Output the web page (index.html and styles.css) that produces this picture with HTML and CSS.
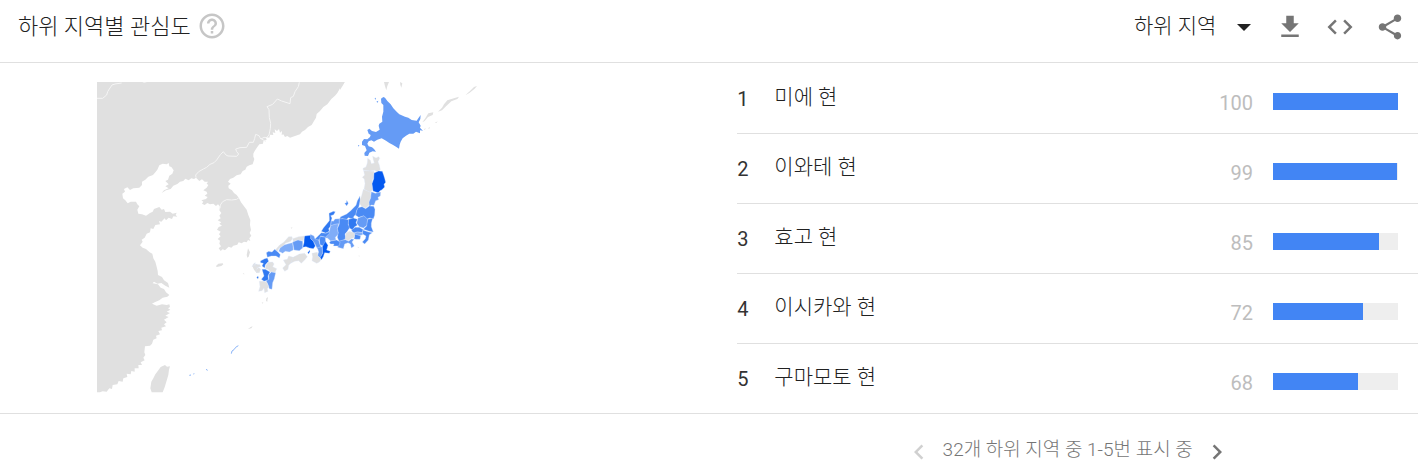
FILE: index.html
```html
<!DOCTYPE html>
<html lang="ko">
<head>
    <meta charset="UTF-8">
    <meta name="viewport" content="width=device-width, initial-scale=1.0">
    <title>하위 지역별 관심도</title>
    <link rel="stylesheet" href="styles.css">
</head>
<body>
    <section class="widget">
        <header class="widget-header">
            <h1>하위 지역별 관심도</h1>
            <button class="icon-button help" aria-label="도움말">
                <svg viewBox="0 0 24 24"><path d="M11 18h2v-2h-2v2zm1-16C6.48 2 2 6.48 2 12s4.48 10 10 10 10-4.48 10-10S17.52 2 12 2zm0 18c-4.41 0-8-3.59-8-8s3.59-8 8-8 8 3.59 8 8-3.59 8-8 8zm0-14c-2.21 0-4 1.79-4 4h2c0-1.1.9-2 2-2s2 .9 2 2c0 2-3 1.75-3 5h2c0-2.25 3-2.5 3-5 0-2.21-1.79-4-4-4z"/></svg>
            </button>
            <div class="actions">
                <div class="select-wrap">
                    <select aria-label="지역 단위">
                        <option>하위 지역</option>
                    </select>
                </div>
                <button class="icon-button" aria-label="다운로드">
                    <svg viewBox="0 0 24 24"><path d="M19 9h-4V3H9v6H5l7 7 7-7zM5 18v2h14v-2H5z"/></svg>
                </button>
                <button class="icon-button" aria-label="삽입">
                    <svg viewBox="0 0 24 24"><path d="M9.4 16.6L4.8 12l4.6-4.6L8 6l-6 6 6 6 1.4-1.4zm5.2 0l4.6-4.6-4.6-4.6L16 6l6 6-6 6-1.4-1.4z"/></svg>
                </button>
                <button class="icon-button" aria-label="공유">
                    <svg viewBox="0 0 24 24"><path d="M18 16.08c-.76 0-1.44.3-1.96.77L8.91 12.7c.05-.23.09-.46.09-.7s-.04-.47-.09-.7l7.05-4.11c.54.5 1.25.81 2.04.81 1.66 0 3-1.34 3-3s-1.34-3-3-3-3 1.34-3 3c0 .24.04.47.09.7L8.04 9.81C7.5 9.31 6.79 9 6 9c-1.66 0-3 1.34-3 3s1.34 3 3 3c.79 0 1.5-.31 2.04-.81l7.12 4.16c-.05.21-.08.43-.08.65 0 1.61 1.31 2.92 2.92 2.92s2.92-1.31 2.92-2.92-1.31-2.92-2.92-2.92z"/></svg>
                </button>
            </div>
        </header>

        <div class="widget-content">
            <div class="map">
                <svg viewBox="291 246 1140 933" role="img" aria-label="지도">
                    <!-- Mainland and Korea -->
                    <g transform="translate(270 225)">
                        <path class="land" d="M21 21H764L758 30 750 40 742 54 735 62 724 72 712 88 700 96 690 108 680 117 678 128 672 138 665 150 654 156 645 165 636 170 630 178 615 183 600 188 592 183 585 186 580 178 575 180 576 168 570 173 567 162 561 168 554 163 556 174 548 172 550 180 540 179 538 188 527 186 530 194 520 199 519 206 508 208 502 216 494 228 490 236 490 245 493 252 488 268 478 271 470 275 466 284 458 288 452 298 440 301 430 308 420 312 414 320 422 326 415 332 416 340 426 346 432 354 440 360 447 370 453 382 462 394 470 404 475 420 481 435 480 450 483 465 479 474 484 482 478 490 481 498 474 495 470 502 462 500 455 505 446 502 442 509 430 512 424 518 416 515 405 526 398 523 392 528 386 520 393 514 388 506 390 497 383 492 392 484 387 478 392 470 381 464 386 456 396 452 388 446 394 442 383 436 392 430 388 422 394 414 388 406 390 395 384 388 378 393 370 386 360 388 352 384 344 390 336 386 340 380 334 376 348 372 353 366 344 362 352 356 350 350 340 346 350 338 355 330 350 326 354 320 344 320 336 313 328 318 318 308 312 312 304 310 296 316 286 311 280 318 270 320 262 327 250 332 242 342 228 346 215 354 222 346 236 340 226 334 236 328 226 318 234 314 238 302 247 296 251 286 244 276 238 274 236 264 230 268 218 266 208 271 202 284 196 292 189 300 175 305 166 314 156 320 156 330 148 338 130 340 120 345 112 337 102 342 105 350 97 356 99 370 106 376 113 385 122 380 138 380 142 388 148 394 142 404 145 416 156 418 168 422 180 414 188 410 192 402 208 396 215 404 222 402 226 411 240 410 248 416 260 413 257 420 262 425 250 424 246 432 236 428 228 436 224 430 214 440 207 438 210 448 196 450 190 462 182 460 180 472 170 476 164 488 155 494 158 500 150 511 158 518 168 522 179 532 187 536 190 550 196 560 200 575 203 588 204 600 216 606 222 616 234 624 238 638 226 632 214 624 202 626 192 620 188 625 204 628 212 638 222 642 228 652 238 660 232 665 218 668 208 676 194 682 186 686 200 692 216 688 230 690 238 688 240 696 234 700 241 704 230 710 240 714 226 722 236 726 222 734 230 742 222 748 228 754 214 758 216 766 205 768 210 778 198 782 200 790 190 794 186 806 180 812 165 814 163 832 166 840 160 848 164 856 152 862 156 870 145 870 146 880 134 880 134 890 124 888 122 898 110 896 112 906 100 910 98 920 86 918 82 928 68 930 66 942 58 940 50 950 38 949 30 952H21z"/>
                        <path class="border" d="M21 70H38L50 60 53 50 58 42 66 30 75 27 95 24M156 19L162 22 170 20M318 308L317 300 326 290 340 282 350 277 360 268 372 263 380 255 386 246 392 238 400 230 408 240 414 243 440 244 446 237 440 230 437 222 450 218 470 217 478 202 490 202 494 190 497 178 507 182 510 188 513 192 522 187 530 188 537 180 541 160 542 145 538 128 537 104 531 95 548 88 562 72 575 78 600 86 602 68 610 64 615 50 625 35 628 22M512 190L528 200M390 400L391 390 398 380 410 374 425 375 440 373 447 368"/>
                        <path class="land" d="M225 870L231 875 240 874 237 884 235 900 229 920 224 937 218 952H185L181 940 184 920 190 910 196 898 205 886 212 876zM378 573L385 566 398 565 400 568 394 573 380 576zM470 540L474 520 480 532 476 545 472 548zM458 597L461 595 464 598zM487 573L500 568 505 576 500 582 506 590 500 594 492 584zM515 683L520 682 518 686zM528 678L529 670 533 668 532 680zM474 762L482 756 488 754 484 760zM465 778L466 775zM526 409L530 407z"/>
                        <path class="okinawa" d="M424 836L426 828 432 824 437 817 445 812M298 901L303 900M310 897L313 896M348 883L353 886"/>
                    </g>
                    <!-- Hokkaido, Kuril islands, northern Tohoku -->
                    <g transform="translate(1020 225)">
                        <path class="land" d="M0 21H14L8 32 0 45zM132 21H147L142 33 139 46 135 34zM180 21L187 25 184 38 181 30zM247 142L256 130 265 115 280 112 278 120 264 126 254 138zM294 110L306 98 312 88 322 76 334 72 357 65 352 72 334 79 318 94 306 106zM376 61L390 48 402 36 411 33 404 41 388 54zM252 163L257 159 255 165zM264 160L270 156 268 161zM284 144L293 139 289 144z"/>
                        <path class="c4" d="M123 71L130 66 135 68 142 78 152 88 160 100 170 110 178 118 195 125 205 128 215 135 230 137 236 128 242 120 241 132 236 142 242 152 240 158 249 167 240 166 240 175 228 170 220 176 208 176 198 182 188 190 182 200 179 209 177 221 168 215 158 209 148 204 138 197 125 190 112 194 102 200 94 196 86 199 82 206 86 214 96 217 102 222 108 230 98 229 88 233 84 243 74 242 73 234 80 226 75 213 66 210 66 200 72 192 82 193 90 186 92 180 86 176 82 165 88 161 96 168 108 171 119 164 116 152 118 146 127 140 126 125 130 110 130 90 124 84zM104 70L108 68 106 75zM109 80L115 77 113 83zM54 210L58 211 56 215z"/>
                        <path class="land edge" d="M83 250L91 256 94 266 103 264 100 254 98 244 108 249 116 245 119 250 114 260 118 270 121 284 112 290 104 286 90 288 70 286 69 280 78 276 82 264z"/>
                        <path class="land edge" d="M71 287L102 289 101 304 97 318 96 332 98 344 90 352 72 343 75 326 73 312 67 307 74 300z"/>
                        <path class="c1 edge" d="M102 294L116 288 127 289 131 300 134 310 137 322 132 328 134 336 125 345 120 347 115 354 99 348 96 326 101 312z"/>
                    </g>
                    <!-- Honshu, Shikoku, Kyushu -->
                    <g transform="translate(720 570)">
                        <g class="edge">
                            <path class="land" d="M370 -2L392 7 393 20 387 34 388 44 378 54 366 50 360 42 358 32 364 20z"/>
                            <path class="c4" d="M394 5L406 10 422 6 421 18 414 22 416 29 407 32 402 46 394 45 388 50 387 36 392 24z"/>
                            <path class="c3" d="M360 18L360 32 358 44 356 52 350 62 348 74 342 78 340 88 325 83 318 90 308 86 298 88 302 80 320 72 332 62 348 46 352 32zM314 40L319 38 320 31 323 36 325 40 320 48z"/>
                            <path class="c3" d="M354 53L366 50 377 56 388 48 401 49 405 58 404 76 400 87 390 84 380 88 372 78 356 82 347 76 350 62z"/>
                            <path class="c2" d="M267 70L280 64 286 65 281 74 272 77 276 84 273 94 272 108 266 116 268 124 258 130 244 124 250 114 260 102 268 92 268 84z"/>
                            <path class="c4" d="M274 92L280 94 285 87 298 86 298 102 284 104 272 108z"/>
                            <path class="c5" d="M272 107L284 103 296 101 292 116 296 132 286 142 288 150 272 153 262 144 254 144 256 130 268 124z"/>
                            <path class="c3" d="M298 87L308 86 326 89 325 104 330 112 322 124 315 132 318 146 306 152 297 154 292 142 295 128 292 116 298 102z"/>
                            <path class="c2" d="M326 88L340 84 352 88 348 98 352 106 344 110 338 120 328 114 325 100z"/>
                            <path class="c4" d="M354 84L372 77 383 88 381 106 370 114 358 110 350 100z"/>
                            <path class="c3" d="M383 88L398 85 394 100 394 110 400 126 388 124 370 118 380 108z"/>
                            <path class="c3" d="M334 120L346 112 358 112 370 119 366 128 352 126 340 130z"/>
                            <path class="c5" d="M340 129L352 126 368 128 368 134 356 138z"/>
                            <path class="c3" d="M368 120L386 126 397 128 388 134 385 150 374 162 367 156 376 146 378 138 368 132z"/>
                            <path class="c3" d="M344 132L362 138 360 148 348 148 342 146z"/>
                            <path class="land" d="M318 130L328 124 342 128 344 142 332 146 326 152 315 148z"/>
                            <path class="c4" d="M296 154L306 151 316 149 326 154 334 147 342 148 336 156 343 168 334 174 331 162 324 158 314 162 310 176 293 172z"/>
                            <path class="c3" d="M272 153L290 150 300 156 297 168 280 168 282 162 272 162 268 158z"/>
                            <path class="c3" d="M218 152L228 144 244 128 258 130 266 126 268 130 256 142 242 138 240 148 226 154z"/>
                            <path class="c3" d="M241 139L256 142 257 158 250 168 240 164 238 150z"/>
                            <path class="c4" d="M211 133L222 138 225 147 236 150 239 162 244 172 232 176 226 164 220 154 212 146z"/>
                            <path class="c4" d="M232 173L246 170 248 188 242 204 232 198 236 186z"/>
                            <path class="c1" d="M256 154L264 166 260 180 271 184 268 190 254 188 250 200 244 210 240 204 248 190 247 170z"/>
                            <path class="c1" d="M193 138L212 136 212 146 220 154 226 168 220 176 208 174 198 170 188 172 192 158zM203 188L209 180 210 184 206 192z"/>
                            <path class="land" d="M216 190L232 187 234 198 244 208 238 216 230 220 216 212 218 200z"/>
                            <path class="land" d="M106 180L118 166 132 156 146 140 156 140 157 146 152 154 136 160 128 170 118 174 112 184z"/>
                            <path class="land" d="M158 146L176 140 193 138 190 152 174 150 160 154z"/>
                            <path class="c5" d="M116 184L120 174 134 164 150 160 158 158 160 180 148 186 136 184 128 190z"/>
                            <path class="c4" d="M158 156L174 150 188 154 188 174 178 182 162 180z"/>
                            <path class="c3" d="M79 188L86 184 96 186 104 178 116 188 121 194 118 204 108 198 94 198 82 202z"/>
                            <path class="land" d="M130 210L142 208 146 198 160 202 170 198 172 206 158 214 146 226 144 238 134 244 128 234 138 224z"/>
                            <path class="land" d="M160 202L178 192 194 190 202 200 194 210 184 220 176 212 164 214 152 220 156 210z"/>
                            <path class="c2" d="M61 213L74 206 82 204 86 214 76 224 74 234 66 228 70 220 62 218z"/>
                            <path class="land" d="M84 217L98 216 102 222 98 230 110 236 106 246 92 246 84 238 76 236 78 226z"/>
                            <path class="c2" d="M66 238L76 238 90 246 84 258 86 270 72 274 64 268 72 258zM50 262L54 258 56 264 52 266z"/>
                            <path class="c4" d="M86 254L94 246 107 248 103 266 98 278 96 298 88 296 84 284 78 272 87 268z"/>
                            <path class="land" d="M58 274L72 274 80 276 86 290 82 296 84 304 74 308 72 294 66 302 56 304 60 290z"/>
                            <path class="land" d="M48 240L56 232 62 238 58 248 50 248zM36 230L40 222 46 218 44 226zM44 222L60 224 62 230 50 232z"/>
                        </g>
                        <path class="land" d="M80 324L83 320 82 328zM152 113L158 112 154 116zM356 196L359 198 357 200zM353 170L357 172 354 174z"/>
                    </g>
                </svg>
            </div>

            <ol class="regions">
                <li>
                    <span class="rank">1</span>
                    <span class="name">미에 현</span>
                    <span class="score">100</span>
                    <div class="bar"><div class="bar-fill" style="width: 100%"></div></div>
                </li>
                <li>
                    <span class="rank">2</span>
                    <span class="name">이와테 현</span>
                    <span class="score">99</span>
                    <div class="bar"><div class="bar-fill" style="width: 99%"></div></div>
                </li>
                <li>
                    <span class="rank">3</span>
                    <span class="name">효고 현</span>
                    <span class="score">85</span>
                    <div class="bar"><div class="bar-fill" style="width: 85%"></div></div>
                </li>
                <li>
                    <span class="rank">4</span>
                    <span class="name">이시카와 현</span>
                    <span class="score">72</span>
                    <div class="bar"><div class="bar-fill" style="width: 72%"></div></div>
                </li>
                <li>
                    <span class="rank">5</span>
                    <span class="name">구마모토 현</span>
                    <span class="score">68</span>
                    <div class="bar"><div class="bar-fill" style="width: 68%"></div></div>
                </li>
            </ol>
        </div>

        <footer class="widget-footer">
            <div class="pager">
                <button class="icon-button" aria-label="이전" disabled>
                    <svg viewBox="0 0 24 24"><path d="M15.41 7.41L14 6l-6 6 6 6 1.41-1.41L10.83 12z"/></svg>
                </button>
                <span>32개 하위 지역 중 1-5번 표시 중</span>
                <button class="icon-button" aria-label="다음">
                    <svg viewBox="0 0 24 24"><path d="M10 6L8.59 7.41 13.17 12l-4.58 4.59L10 18l6-6z"/></svg>
                </button>
            </div>
        </footer>
    </section>
</body>
</html>
```

FILE: styles.css
```css
* {
    margin: 0;
    padding: 0;
    box-sizing: border-box;
}

body {
    background: #fff;
    color: #212121;
    font-family: Roboto, "Noto Sans CJK KR", sans-serif;
    font-size: 20px;
    overflow-x: hidden;
}

.widget-header {
    display: flex;
    align-items: center;
    height: 63px;
    padding: 0 13px 9px 18px;
    border-bottom: 1px solid #e0e0e0;
}

.widget-header h1 {
    padding-bottom: 6px;
    font-size: 22px;
    font-weight: 300;
}

.icon-button {
    display: block;
    width: 30px;
    height: 30px;
    border: none;
    background: none;
    color: #757575;
    cursor: pointer;
}

.icon-button svg {
    display: block;
    width: 30px;
    height: 30px;
    fill: currentColor;
}

.icon-button:disabled {
    color: #d0d0d0;
    cursor: default;
}

.help {
    margin: 0 0 2px 6px;
    color: #c6c6c6;
}

.actions {
    display: flex;
    align-items: center;
    gap: 20px;
    margin-left: auto;
}

.select-wrap {
    position: relative;
    margin-right: 4px;
}

.select-wrap::after {
    content: "";
    position: absolute;
    right: 0;
    top: 50%;
    margin-top: -3px;
    border: 7px solid transparent;
    border-top-color: #212121;
    border-bottom: none;
    pointer-events: none;
}

.select-wrap select {
    display: block;
    appearance: none;
    border: none;
    background: none;
    padding: 0 34px 2px 0;
    color: #212121;
    font-family: inherit;
    font-size: 21px;
    font-weight: 300;
}

.widget-content {
    display: grid;
    grid-template-columns: 52fr 48fr;
    border-bottom: 1px solid #e0e0e0;
}

.map {
    padding: 19px 20px 0 97px;
}

.map svg {
    display: block;
    width: 100%;
    max-width: 380px;
}

.land {
    fill: #e0e0e0;
}

.border {
    fill: none;
    stroke: #f5f5f5;
    stroke-width: 3;
}

.edge {
    stroke: #dce8fc;
    stroke-width: 1;
}

.okinawa {
    fill: none;
    stroke: #8ab4f8;
    stroke-width: 3;
}

.c1 { fill: #055af0; }
.c2 { fill: #3079f1; }
.c3 { fill: #4a8af4; }
.c4 { fill: #659bf5; }
.c5 { fill: #80adf8; }

.regions {
    list-style: none;
}

.regions li {
    display: flex;
    align-items: center;
    height: 70px;
    padding-right: 20px;
    border-top: 1px solid #e0e0e0;
}

.regions li:first-child {
    border-top-color: transparent;
}

.rank {
    width: 37px;
    color: #333;
}

.name {
    flex: 1;
    padding-bottom: 7px;
    font-size: 21px;
    font-weight: 300;
}

.score {
    padding-top: 8px;
    color: #bdbdbd;
}

.bar {
    width: 125px;
    height: 17px;
    margin: 6px 0 0 20px;
    background: #eee;
}

.bar-fill {
    height: 100%;
    background: #4285f4;
}

.widget-footer {
    display: flex;
    justify-content: flex-end;
}

.pager {
    display: flex;
    align-items: center;
    justify-content: center;
    gap: 9px;
    width: 48%;
    padding: 20px 20px 0 0;
    color: #757575;
    font-size: 19px;
    font-weight: 300;
}

.pager span {
    padding-bottom: 8px;
}
```
